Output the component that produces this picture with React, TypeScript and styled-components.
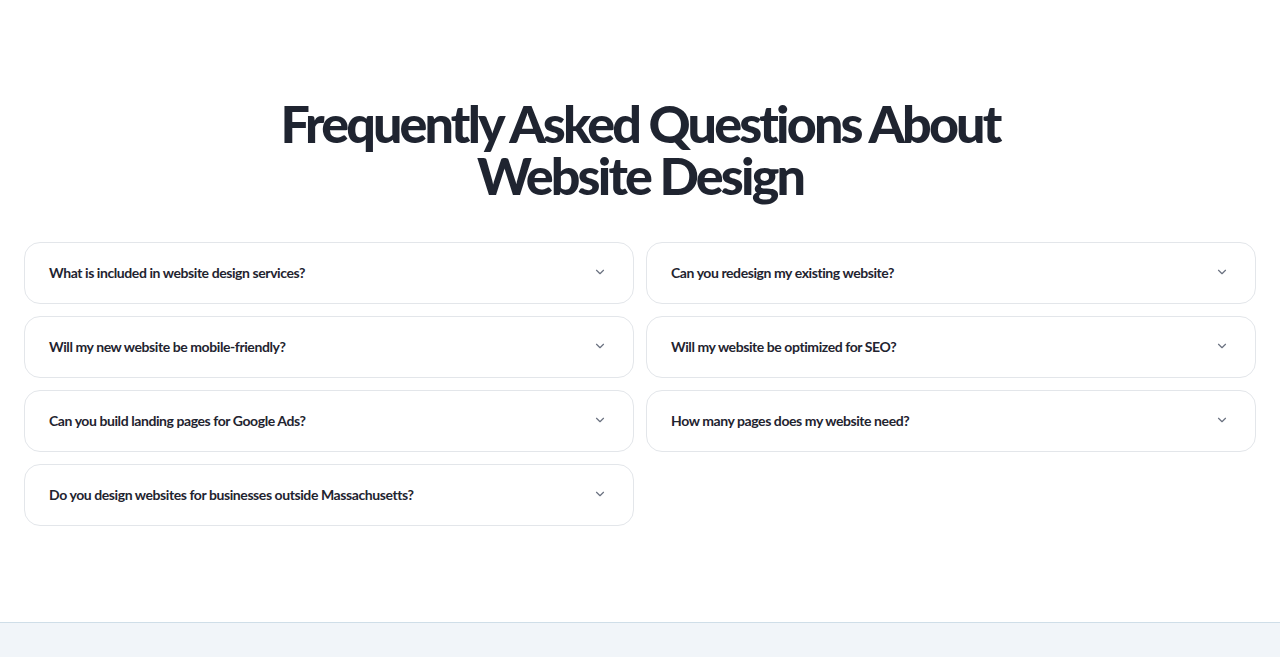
import React from "react";
import styled, { createGlobalStyle } from "styled-components";

const Global = createGlobalStyle`
  html, body { margin: 0; padding: 0; background: #ffffff; }
  body { font-family: "Lato", "Inter", sans-serif; color: #1f2430; }
  * { box-sizing: border-box; }
`;

const Section = styled.section`
  padding: 97px 24px 96px;
  background: #ffffff;
`;

const Title = styled.h2`
  margin: 0 auto 41px;
  max-width: 760px;
  text-align: center;
  font-family: "Lato", sans-serif;
  font-weight: 900;
  font-size: 52px;
  line-height: 52px;
  letter-spacing: -0.055em;
  color: #1f2430;
`;

const Grid = styled.div`
  display: grid;
  grid-template-columns: 1fr 1fr;
  gap: 12px;
  align-items: start;
`;

const Column = styled.div`
  display: flex;
  flex-direction: column;
  gap: 12px;
`;

const Item = styled.button`
  display: flex;
  align-items: center;
  justify-content: space-between;
  height: 62px;
  width: 100%;
  padding: 0 26px 2px 24px;
  background: #ffffff;
  border: 1px solid #e3e6ea;
  border-radius: 16px;
  cursor: pointer;
  text-align: left;
`;

const Question = styled.span`
  font-family: "Lato", sans-serif;
  font-weight: 700;
  font-size: 14px;
  letter-spacing: -0.03em;
  color: #1f2430;
`;

const Chevron = styled.svg`
  width: 14px;
  height: 14px;
  flex: none;
  color: #6b7280;
`;

const Footer = styled.div`
  height: 35px;
  background: #f1f5f9;
  border-top: 1px solid #cfdee8;
`;

const left = [
  "What is included in website design services?",
  "Will my new website be mobile-friendly?",
  "Can you build landing pages for Google Ads?",
  "Do you design websites for businesses outside Massachusetts?",
];
const right = [
  "Can you redesign my existing website?",
  "Will my website be optimized for SEO?",
  "How many pages does my website need?",
];

const Faq = ({ q }: { q: string }) => (
  <Item type="button">
    <Question>{q}</Question>
    <Chevron viewBox="0 0 24 24" fill="none" stroke="currentColor" strokeWidth={2} strokeLinecap="round" strokeLinejoin="round">
      <path d="M6 9l6 6 6-6" />
    </Chevron>
  </Item>
);

export default function App() {
  return (
    <>
      <Global />
      <Section>
        <Title>Frequently Asked Questions About Website Design</Title>
        <Grid>
          <Column>{left.map((q) => <Faq key={q} q={q} />)}</Column>
          <Column>{right.map((q) => <Faq key={q} q={q} />)}</Column>
        </Grid>
      </Section>
      <Footer />
    </>
  );
}
